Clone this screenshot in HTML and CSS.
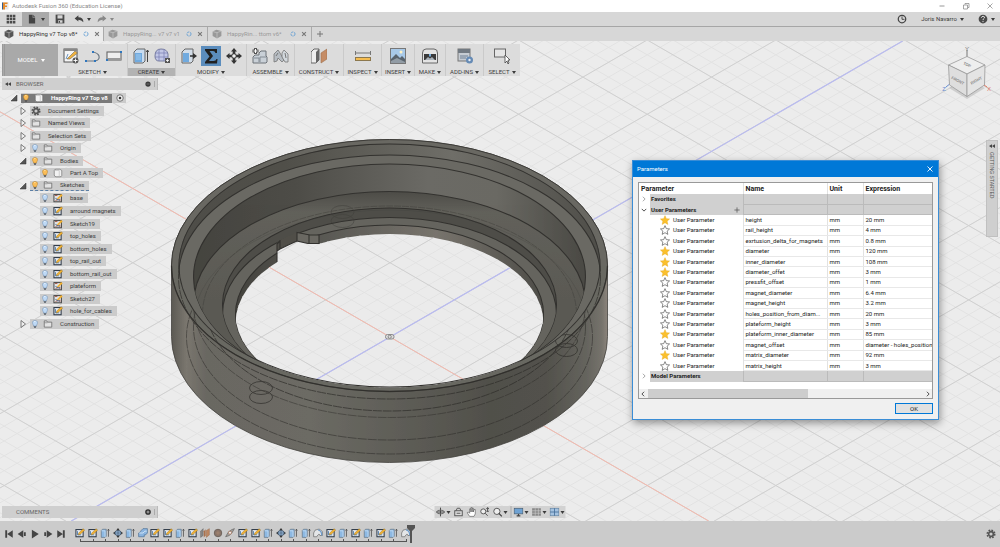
FILE: index.html
```html
<!DOCTYPE html>
<html lang="en">
<head>
<meta charset="utf-8">
<title>Autodesk Fusion 360 (Education License)</title>
<link rel="stylesheet" href="styles.css">
</head>
<body>
<svg class="defs" width="0" height="0" aria-hidden="true">
  <symbol id="sketch" viewBox="0 0 16 16"><rect x="1.5" y="2.500" width="11.500" height="11.500" fill="#e9edf2" stroke="#2f3a48" stroke-width="1.700"/><path d="M4 5v6h6" fill="none" stroke="#4d79a8" stroke-width="1.400"/><path d="M5 11L6 8L13 1L15.500 3.500L8.500 10Z" fill="#f2b233" stroke="#7c5a17" stroke-width=".6"/></symbol>
  <symbol id="sketch2" viewBox="0 0 16 16"><rect x="1.500" y="2.500" width="12" height="11.500" fill="#e0e3e6" stroke="#4a4a4a" stroke-width="1.600"/><path d="M3 4h4M4 12l5-2M11 9v4" stroke="#a55b4a" stroke-width="1.500"/><path d="M4 8l3 3h4" fill="none" stroke="#3d618c" stroke-width="1.500"/><path d="M6 9L13 1.500L15.500 4L8.500 10Z" fill="#f2b233"/></symbol>
  <symbol id="extrude" viewBox="0 0 16 16"><path d="M2 4L4 2H10V13L8 15H2Z" fill="#8db9e3" stroke="#5c6a78"/><path d="M2.500 4.500H8V14.500" fill="none" stroke="#d5e8f8"/><path d="M13.500 2V14M12 4L13.500 2L15 4" fill="none" stroke="#444" stroke-width="1.200"/></symbol>
  <symbol id="move" viewBox="0 0 16 16"><path d="M8 0L11 3.500H9.300V6.700H12.500V5L16 8L12.500 11V9.300H9.300V12.500H11L8 16L5 12.500H6.700V9.300H3.500V11L0 8L3.500 5V6.700H6.700V3.500H5Z" fill="#353535"/><circle cx="8" cy="8" r="2.300" fill="#eee" stroke="#333"/></symbol>
  <symbol id="orbit" viewBox="0 0 16 16"><path d="M8 0L11 4H5ZM8 16L5 12H11ZM0 8L4 5V11ZM16 8L12 11V5Z" fill="#353535"/><ellipse cx="8" cy="8" rx="5" ry="4" fill="#9dbfe2" stroke="#3b4e63" stroke-width="1.300"/><path d="M8 4V12M4 8H12" stroke="#3b4e63"/></symbol>
  <symbol id="combine" viewBox="0 0 16 16"><path d="M5 4L8 1H15V8L12 11H10V14H1V8L4 6Z" fill="#8bb4df" stroke="#43698f"/><path d="M2 8H8L11 5H14" fill="none" stroke="#d9ebfa" stroke-width="1.300"/></symbol>
  <symbol id="plane" viewBox="0 0 16 16"><path d="M1 5L5 1V12L1 15Z" fill="#8a8a8a" stroke="#555" stroke-width=".7"/><path d="M6 5L9 2V12L6 15Z" fill="#aa714c"/><path d="M10 4L15 1V11L10 15Z" fill="#bd8661" stroke="#8d6042" stroke-width=".6"/></symbol>
  <symbol id="hole" viewBox="0 0 16 16"><circle cx="8" cy="8" r="6" fill="#8b7569" stroke="#6c625c" stroke-width="1.500"/><path d="M5 8H11M8 5V11" stroke="#ad8b75"/></symbol>
  <symbol id="joint" viewBox="0 0 16 16"><path d="M1 14L5 7L10 3L15 1L11 8L7 12Z" fill="#a5a19c" stroke="#5c5c5c"/><circle cx="8" cy="7.500" r="2.500" fill="#eee" stroke="#a76949"/></symbol>
  <symbol id="fillet" viewBox="0 0 16 16"><path d="M1 14V8Q2 2 8 2H11L15 6V12H11Q10 7 6 14Z" fill="#e4e6e8" stroke="#5b5b5b"/><path d="M8 3Q14 4 14 12" fill="none" stroke="#6f9ccb" stroke-width="2"/></symbol>
  <symbol id="bulb-on" viewBox="0 0 16 16"><path d="M8 1C2 1 2 7 5 10V12H11V10C14 7 14 1 8 1Z" fill="#fcbd57" stroke="#a8741d" stroke-width=".9"/><path d="M6 4Q7 2.500 9 3" fill="none" stroke="#fff2bd" stroke-width="1.500"/><path d="M5.500 13H10.500M6 15H10" stroke="#565656" stroke-width="1.600"/></symbol>
  <symbol id="bulb-off" viewBox="0 0 16 16"><path d="M8 1C2 1 2 7 5 10V12H11V10C14 7 14 1 8 1Z" fill="#bed9f5" stroke="#6487ad" stroke-width=".9"/><path d="M6 4Q7 2.500 9 3" fill="none" stroke="#fff" stroke-width="1.500"/><path d="M5.500 13H10.500M6 15H10" stroke="#59636e" stroke-width="1.600"/></symbol>
  <symbol id="folder" viewBox="0 0 16 16"><path d="M2 3H6L7 5H14V13H2Z" fill="#e2e2e2" stroke="#666" stroke-width="1.200"/><path d="M2 6H7" stroke="#777"/></symbol>
  <symbol id="body" viewBox="0 0 16 16"><path d="M2 4Q2 2 5 2H11L14 4V12Q14 14 11 14H5Q2 14 2 11Z" fill="#f2f2f2" stroke="#666"/><path d="M3 4H10V13" fill="none" stroke="#b9b9b9"/></symbol>
  <symbol id="gear" viewBox="0 0 16 16"><circle cx="8" cy="8" r="6" fill="none" stroke="#555" stroke-width="2.500" stroke-dasharray="2.700 2"/><circle cx="8" cy="8" r="3.800" fill="none" stroke="#555" stroke-width="2.600"/></symbol>
  <symbol id="tri-open" viewBox="0 0 16 16"><path d="M14 2V14H2Z" fill="#555" stroke="#333"/></symbol>
  <symbol id="tri-closed" viewBox="0 0 16 16"><path d="M4 1L13 8L4 15Z" fill="#eee" stroke="#555" stroke-width="1.500"/></symbol>
  <symbol id="cube" viewBox="0 0 16 16"><path d="M1 4L7 1L15 3V11L8 15L1 11Z" fill="currentColor"/><path d="M1 4L8 6L15 3M8 6V15" fill="none" stroke="#d8d8d8" stroke-width=".8"/></symbol>
  <symbol id="star-on" viewBox="0 0 16 16"><path d="M8 1L10.100 5.800L15.300 6.300L11.400 9.800L12.500 15L8 12.300L3.500 15L4.600 9.800L.7 6.300L5.900 5.800Z" fill="#fbc02d" stroke="#e3a81f" stroke-width=".7"/></symbol>
  <symbol id="star-off" viewBox="0 0 16 16"><path d="M8 1L10.100 5.800L15.300 6.300L11.400 9.800L12.500 15L8 12.300L3.500 15L4.600 9.800L.7 6.300L5.900 5.800Z" fill="#fff" stroke="#555" stroke-width="1.100"/></symbol>
  <symbol id="sync" viewBox="0 0 16 16"><circle cx="8" cy="8" r="5.500" fill="none" stroke="#5f9cd3" stroke-width="2.200" stroke-dasharray="7 1.600"/></symbol>
  <symbol id="cross" viewBox="0 0 16 16"><path d="M3 3L13 13M13 3L3 13" stroke="currentColor" stroke-width="3"/></symbol>
</svg>

<header class="titlebar">
  <svg class="s8" viewBox="0 0 16 16"><rect x="2" y="0" width="13" height="15" fill="#e6e6e6"/><path d="M4 1H13V4H8V7H12V10H8V15H4Z" fill="#e58a2b"/><path d="M2 1H4V15H2Z" fill="#315d92"/></svg>
  <h1>Autodesk Fusion 360 (Education License)</h1>
  <div class="window-buttons">
    <button aria-label="Minimize"><svg class="s8" viewBox="0 0 16 16"><path d="M3 8H13" stroke="#777" stroke-width="1.500"/></svg></button>
    <button aria-label="Restore"><svg class="s8" viewBox="0 0 16 16"><path d="M3 6H11V14H3ZM6 5V3H14V11H12" fill="none" stroke="#777" stroke-width="1.300"/></svg></button>
    <button aria-label="Close"><svg class="s8" viewBox="0 0 16 16"><path d="M3 3L13 13M13 3L3 13" stroke="#777" stroke-width="1.300"/></svg></button>
  </div>
</header>

<div class="quickbar">
  <button class="q-grid" aria-label="Data panel"><svg class="s10" viewBox="0 0 16 16"><path d="M1 1h4v4H1zM6 1h4v4H6zM11 1h4v4h-4zM1 6h4v4H1zM6 6h4v4H6zM11 6h4v4h-4zM1 11h4v4H1zM6 11h4v4H6zM11 11h4v4h-4z" fill="#4b4b4b"/></svg></button>
  <button class="q-file" aria-label="File"><svg class="s10" viewBox="0 0 16 16"><path d="M3 1H9V6H13V15H3Z" fill="#444"/><path d="M10 1L13 5H10Z" fill="#444"/></svg><i class="caret"></i></button>
  <button class="q-save" aria-label="Save"><svg class="s10" viewBox="0 0 16 16"><path d="M1 1H15V15H1Z" fill="#4a4a4a"/><path d="M4 2H12V7H4ZM5 10H12V14H5Z" fill="#d5d5d5"/><path d="M6 11h2v3H6z" fill="#444"/></svg></button>
  <button class="q-undo" aria-label="Undo"><svg class="s10" viewBox="0 0 16 16"><path d="M1 7L7 2V5Q15 5 15 13Q12 9 7 9V12Z" fill="#444"/></svg><i class="caret"></i></button>
  <button class="q-undo q-redo" aria-label="Redo"><svg class="s10" viewBox="0 0 16 16"><path d="M15 7L9 2V5Q1 5 1 13Q4 9 9 9V12Z" fill="#888"/></svg><i class="caret"></i></button>
  <div class="account">
    <button aria-label="Job status"><svg class="s10" viewBox="0 0 16 16"><circle cx="8" cy="8" r="6" fill="none" stroke="#444" stroke-width="2"/><path d="M8 4V8.500H12" fill="none" stroke="#444" stroke-width="1.500"/></svg></button>
    <button class="user">Joris Navarro <i class="caret"></i></button>
    <button aria-label="Help"><svg class="s10" viewBox="0 0 16 16"><circle cx="8" cy="8" r="7" fill="#4a4a4a"/><path d="M5.500 6Q6 3.500 8.200 3.700Q11 4 10.300 6.300Q8 8 8 9.500M8 11V13" fill="none" stroke="#ddd" stroke-width="1.600"/></svg><i class="caret"></i></button>
  </div>
</div>

<nav class="tabs">
  <div class="tab active"><svg class="s10"><use href="#cube"/></svg><a href="#t1">HappyRing v7 Top v8*</a><svg class="s6"><use href="#sync"/></svg><button aria-label="Close tab"><svg class="s6"><use href="#cross"/></svg></button></div>
  <div class="tab"><svg class="s10"><use href="#cube"/></svg><a href="#t2">HappyRing... v7 v7 v1</a><svg class="s6"><use href="#sync"/></svg><button aria-label="Close tab"><svg class="s6"><use href="#cross"/></svg></button></div>
  <div class="tab"><svg class="s10"><use href="#cube"/></svg><a href="#t3">HappyRin... ttom v6*</a><svg class="s6"><use href="#sync"/></svg><button aria-label="Close tab"><svg class="s6"><use href="#cross"/></svg></button></div>
  <button class="new-tab" aria-label="New tab"><svg class="s8" viewBox="0 0 16 16"><path d="M8 2V14M2 8H14" stroke="#777" stroke-width="2"/></svg></button>
</nav>

<main class="viewport">
  <svg class="scene" viewBox="0 41 1000 480" preserveAspectRatio="xMidYMid slice">
    <defs>
      <pattern id="minor" width="10" height="10" patternUnits="userSpaceOnUse" patternTransform="matrix(1.286 .7426 1.286 -.7426 377.140 337)"><path d="M0 5H10M5 0V10" stroke="#e2e2e2" stroke-width=".7"/></pattern>
      <pattern id="major" width="50" height="50" patternUnits="userSpaceOnUse" patternTransform="matrix(1.286 .7426 1.286 -.7426 325.700 337)"><path d="M0 25H50M25 0V50" stroke="#d0d0d0" stroke-width=".7"/></pattern>
      <g id="floor">
        <rect y="41" width="1000" height="480" fill="#ececec"/>
        <rect y="41" width="1000" height="480" fill="url(#minor)"/>
        <rect y="41" width="1000" height="480" fill="url(#major)"/>
        <path d="M0 111.800L708.700 521" stroke="#f5b9ad" stroke-width="1"/>
        <path d="M902.700 41L71.300 521" stroke="#b9bbf0" stroke-width="1.200"/>
      </g>
      <linearGradient id="outer" gradientUnits="userSpaceOnUse" x1="171" x2="608" y1="0" y2="0">
        <stop offset="0" stop-color="#5b5953"/><stop offset=".035" stop-color="#7b776f"/><stop offset=".08" stop-color="#6a6862"/><stop offset=".32" stop-color="#6c6b64"/><stop offset=".55" stop-color="#5d5c56"/><stop offset=".73" stop-color="#51504a"/><stop offset=".86" stop-color="#53524c"/><stop offset=".95" stop-color="#65645e"/><stop offset=".985" stop-color="#76736c"/><stop offset="1" stop-color="#8c857d"/>
      </linearGradient>
      <linearGradient id="lip" gradientUnits="userSpaceOnUse" x1="180" x2="600" y1="0" y2="0"><stop offset="0" stop-color="#4e4d48"/><stop offset=".25" stop-color="#504f49"/><stop offset=".65" stop-color="#6f6e68"/><stop offset="1" stop-color="#4f4e49"/></linearGradient>
      <linearGradient id="wall" gradientUnits="userSpaceOnUse" x1="200" x2="580" y1="0" y2="0"><stop offset="0" stop-color="#464540"/><stop offset=".25" stop-color="#4d4c47"/><stop offset=".6" stop-color="#6b6a65"/><stop offset=".78" stop-color="#6a6963"/><stop offset="1" stop-color="#4c4b46"/></linearGradient>
      <linearGradient id="base" gradientUnits="userSpaceOnUse" x1="0" x2="0" y1="190" y2="300"><stop offset="0" stop-color="#4b4a45"/><stop offset=".2" stop-color="#62615b"/><stop offset="1" stop-color="#5b5a54"/></linearGradient>
      <linearGradient id="bore" gradientUnits="userSpaceOnUse" x1="236" x2="544" y1="0" y2="0"><stop offset="0" stop-color="#44433e"/><stop offset=".3" stop-color="#5b5a55"/><stop offset=".65" stop-color="#78746d"/><stop offset="1" stop-color="#4e4d48"/></linearGradient>
      <clipPath id="c1"><ellipse cx="389.500" cy="265.500" rx="211" ry="122"/></clipPath>
      <clipPath id="c2"><ellipse cx="389.500" cy="277" rx="196" ry="113"/></clipPath>
      <clipPath id="c3"><ellipse cx="389.500" cy="304.500" rx="167" ry="96.500"/></clipPath>
      <clipPath id="c4"><ellipse cx="389.500" cy="314" rx="154" ry="89"/></clipPath>
      <clipPath id="c5"><ellipse cx="389.500" cy="323" rx="154" ry="89"/></clipPath>
      <clipPath id="gap"><path d="M277 263V251L280 249Q288 245 297 241L308 243L319 243.500L300 262Z"/></clipPath>
      <clipPath id="front"><path clip-rule="evenodd" d="M160 265.500H179A210.500 122 0 0 0 600 265.500H620V480H160Z"/></clipPath>
    </defs>
    <use href="#floor"/>
    <path d="M171.500 265.500A218 126 0 0 1 607.500 265.500V336.500A218 126 0 0 1 171.500 336.500Z" fill="url(#outer)" stroke="#44433f" stroke-width=".8"/>
    <ellipse cx="389.500" cy="265.500" rx="218" ry="126" fill="#696862" stroke="#3a3936" stroke-width=".9"/>
    <g clip-path="url(#c1)" stroke="#33322f" stroke-width="1.100">
      <rect x="170" y="130" width="440" height="270" fill="url(#lip)" stroke="none"/>
      <ellipse cx="389.500" cy="277" rx="211" ry="122" fill="#6a6963"/>
      <ellipse cx="389.500" cy="277" rx="196" ry="113" fill="url(#wall)"/>
      <g clip-path="url(#c2)">
        <ellipse cx="389.500" cy="304.500" rx="196" ry="113" fill="url(#base)"/>
        <ellipse cx="389.500" cy="304.500" rx="167" ry="96.500" fill="#4f4e49"/>
        <g clip-path="url(#c3)">
          <ellipse cx="389.500" cy="314" rx="167" ry="96.500" fill="#66655f"/>
          <ellipse cx="389.500" cy="314" rx="154" ry="89" fill="url(#bore)"/>
          <g clip-path="url(#c4)"><g clip-path="url(#c5)"><use href="#floor"/></g></g>
          <path d="M277 243L280 240Q288 236 297 232L310 235H319V243.500L308 243L297 241Q288 245 280 249L277 251Z" fill="#504f49" stroke="none"/>
          <g clip-path="url(#gap)"><use href="#floor"/></g>
          <path d="M297 232.500L310 235H319V243.500H308L297 241Z" fill="#6a6963"/>
          <path d="M309 235V243M277 244V262M280 240V249L277 251M277 244L280 241M297 241Q288 245 280 249" fill="none"/>
        </g>
        <g fill="none" stroke="#3d3c38" stroke-width=".7" opacity=".65"><ellipse cx="389.500" cy="314" rx="187" ry="108" stroke-dasharray="7 1"/><ellipse cx="389.500" cy="323" rx="196" ry="113" opacity=".5"/><ellipse cx="342.500" cy="212" rx="11.500" ry="6.500"/><ellipse cx="342.500" cy="221" rx="11.500" ry="6.500"/></g>
      </g>
      <ellipse cx="389.500" cy="265.500" rx="211" ry="122" fill="none" stroke-width="1.800"/>
    </g>
    <g clip-path="url(#front)" fill="none" stroke="#2c2b28" stroke-width=".9" opacity=".75">
      <ellipse cx="389.500" cy="265.500" rx="218" ry="126" stroke-width="1.300"/>
      <g stroke-dasharray="9 1"><ellipse cx="389.500" cy="277" rx="211" ry="122"/><ellipse cx="389.500" cy="304.500" rx="184" ry="106.500"/><ellipse cx="389.500" cy="304.500" rx="196" ry="113" opacity=".7"/><ellipse cx="389.500" cy="327" rx="196" ry="113" opacity=".8"/><ellipse cx="389.500" cy="337" rx="203" ry="117" opacity=".8"/></g>
      <ellipse cx="261" cy="388" rx="11.500" ry="6.500"/><ellipse cx="261" cy="397" rx="11.500" ry="6.500"/><ellipse cx="566.500" cy="341" rx="11" ry="6.500"/><ellipse cx="566.500" cy="350" rx="11" ry="6.500"/>
    </g>
    <g fill="#ddd" stroke="#777" stroke-width=".8"><rect x="385.500" y="334.500" width="8.500" height="4.500" rx="2"/><circle cx="389.700" cy="336.800" r="1.600"/></g>
    <g class="axis-cube">
      <path d="M967 50V57" stroke="#777"/><path d="M946 87L951 83" stroke="#668ad0"/><path d="M987 87L981 83" stroke="#e1735c"/>
      <path d="M949 88L967 99L985 88L967 80Z" fill="#999" opacity=".35"/>
      <path d="M967 56.500L985 65L967 74L948.500 65Z" fill="#eee" stroke="#999" stroke-width=".8"/>
      <path d="M948.500 65L967 74V96.500L949.500 85Z" fill="#dedede" stroke="#999" stroke-width=".8"/>
      <path d="M985 65L967 74V96.500L984.500 85Z" fill="#e4e4e4" stroke="#999" stroke-width=".8"/>
      <text x="967" y="66" class="face" transform="rotate(25 967 65)">TOP</text>
      <text x="958" y="82" class="face" transform="rotate(28 958 80)">FRONT</text>
      <text x="976" y="82" class="face" transform="rotate(-28 976 80)">RIGHT</text>
      <text x="967" y="51" class="letter" fill="#777">Y</text><text x="944" y="91" class="letter" fill="#668ad0">Z</text><text x="989" y="91" class="letter" fill="#e1735c">X</text>
    </g>
  </svg>

  <div class="toolbar">
    <button class="workspace">MODEL <i class="caret"></i></button>
    <div class="tool-group"><div class="tools">
      <svg class="s16" viewBox="0 0 16 16"><rect x="1" y="1" width="13" height="13" fill="#f5f5f5" stroke="#555"/><path d="M1 1H14V3H1Z" fill="#888"/><path d="M3 11L5 6" stroke="#6794c3"/><path d="M4 11L12 3L14.500 5L7 11Z" fill="#f0b33f" stroke="#555" stroke-width=".5"/><circle cx="12.500" cy="12.500" r="3" fill="#555"/><path d="M12.500 10.500V14.500M10.500 12.500H14.500" stroke="#fff" stroke-width=".9"/></svg>
      <svg class="s16" viewBox="0 0 16 16"><path d="M1 13H10Q15 12 14 8Q13 5 8 4" fill="none" stroke="#6c7782" stroke-width="1.200"/><path d="M0 12h2v2H0zM7 3h2v2H7zM9 12h2v2H9z" fill="#2f76bd"/></svg>
      <svg class="s16" viewBox="0 0 16 16"><rect x="1" y="4" width="14" height="8" fill="#eee" stroke="#666" stroke-width="1.100"/><path d="M1 10H15V12H1Z" fill="#999"/><path d="M0 11h2v2H0zM14 3h2v2h-2z" fill="#2f76bd"/></svg>
    </div><button>SKETCH <i class="caret"></i></button></div>
    <div class="tool-group hot"><div class="tools">
      <svg class="s16" viewBox="0 0 16 16"><path d="M1 4L4 1H12V13L10 15H1Z" fill="#c9dcf0" stroke="#666"/><path d="M2 5H9V14H2Z" fill="#70aadf"/><path d="M3 7H8M3 9H8M3 11H8" stroke="#c5e2fb" stroke-width=".6"/><path d="M14.500 2V14M13.300 4L14.500 2L15.700 4" stroke="#444" fill="none"/></svg>
      <svg class="s16" viewBox="0 0 16 16"><path d="M1 8Q1 1 7 1Q13 1 14 6V13H5Q1 13 1 8Z" fill="#c2c7e6" stroke="#777c9e"/><path d="M5 1V13M10 1V13M1 5H14M1 9H14" stroke="#7980b1" stroke-width=".7"/><rect x="11" y="10" width="5" height="5" fill="#555"/><path d="M13.500 11v3M12 12.500h3" stroke="#fff" stroke-width=".8"/></svg>
    </div><button>CREATE <i class="caret"></i></button></div>
    <div class="tool-group"><div class="tools">
      <svg class="s16" viewBox="0 0 16 16"><path d="M1 4L4 1H12V13L10 15H1Z" fill="#d3dde8" stroke="#666"/><path d="M2 5H8V14H2Z" fill="#70aadf"/><path d="M9 7.200H12V5L16 8L12 11V8.800H9Z" fill="#333"/></svg>
      <span class="selected"><svg class="s16" viewBox="0 0 16 16"><path d="M2 1H14V5H12.500Q12 3 10 3H6.500L10 8L6 13H10.500Q13 13 13.500 11H14.500L14 15.500H2V14L6.500 8.500L2 2.500Z" fill="#202020"/></svg></span>
      <svg class="s16"><use href="#move"/></svg>
    </div><button>MODIFY <i class="caret"></i></button></div>
    <div class="tool-group"><div class="tools">
      <svg class="s16" viewBox="0 0 16 16"><path d="M1 9L3 7H7V5L9 3H14V8L15 9V14L14 15H1Z" fill="#c9d0d7" stroke="#6c7278"/><path d="M2 10H7V14M8 9H14M8 9V14" stroke="#838b93" fill="none"/><path d="M3.500 0V6M.5 3H6.500" stroke="#555" stroke-width="3"/><path d="M3.500 1V5M1.500 3H5.500" stroke="#fff" stroke-width="1"/></svg>
      <svg class="s16" viewBox="0 0 16 16"><path d="M1 14V6L5 2L7 5L11 12L9 14L5 10L4 13Z" fill="#b7bdc3" stroke="#777" stroke-width=".8"/><path d="M15 14V6L11 2L9 5V9L12 14Z" fill="#d2d8dd" stroke="#777" stroke-width=".8"/><path d="M3 8L5 5M12 5L13 10" stroke="#777"/></svg>
    </div><button>ASSEMBLE <i class="caret"></i></button></div>
    <div class="tool-group"><div class="tools"><svg class="s16" viewBox="0 0 16 16"><path d="M0 4L3 1H8V12L5 15H0Z" fill="#eee" stroke="#666"/><path d="M5 4L8 1V12L5 15Z" fill="#666"/><path d="M10 5L16 1V11L10 15Z" fill="#c58c65" stroke="#9f704f" stroke-width=".6"/></svg></div><button>CONSTRUCT <i class="caret"></i></button></div>
    <div class="tool-group"><div class="tools"><svg class="s16" viewBox="0 0 16 16"><path d="M.5 3V7M15.500 3V7M1 5H15" stroke="#777"/><rect x=".5" y="9.500" width="15" height="3" fill="#f6bd51" stroke="#8c784e"/></svg></div><button>INSPECT <i class="caret"></i></button></div>
    <div class="tool-group"><div class="tools"><svg class="s16" viewBox="0 0 16 16"><rect x=".5" y=".5" width="15" height="15" fill="#a8c9e8" stroke="#777"/><circle cx="11" cy="4" r="1.500" fill="#fff2c5"/><path d="M1 11L6 6L10 10L12 8L15 11V15H1Z" fill="#59636d"/><path d="M1 13L7 10L15 14V15H1Z" fill="#929ca5"/></svg></div><button>INSERT <i class="caret"></i></button></div>
    <div class="tool-group"><div class="tools"><svg class="s16" viewBox="0 0 16 16"><path d="M.5 5Q.5 1 4 1H12Q15.500 1 15.500 5V15H.5Z" fill="#e3e3e3" stroke="#666"/><path d="M2 6H14V12H2Z" fill="#3a3a3a"/><path d="M7 6H9V8L8 9L7 8Z" fill="#77aede"/><path d="M3 12L6 9L8 10.500L10 9L13 12Z" fill="#aab3bb"/></svg></div><button>MAKE <i class="caret"></i></button></div>
    <div class="tool-group"><div class="tools"><svg class="s16" viewBox="0 0 16 16"><rect x="1" y="1" width="12" height="12" fill="#c6ccd3" stroke="#777"/><path d="M1 1H13V5H1Z" fill="#727a82"/><path d="M3 8H11M3 10H9" stroke="#6e8095"/><circle cx="12.500" cy="12" r="3.500" fill="#668bb5"/><circle cx="12.500" cy="12" r="1.200" fill="#e7edf4"/></svg></div><button>ADD-INS <i class="caret"></i></button></div>
    <div class="tool-group"><div class="tools"><svg class="s16" viewBox="0 0 16 16"><rect x=".5" y="1" width="11" height="8" fill="#e5e5e5" stroke="#666"/><path d="M11 7V15L13 13L14 16L15 15L14 12H16Z" fill="#fff" stroke="#444" stroke-width=".8"/></svg></div><button>SELECT <i class="caret"></i></button></div>
  </div>

  <aside class="browser">
    <div class="panel-head"><svg class="s6" viewBox="0 0 16 16"><path d="M8 3V13L0 8ZM16 3V13L8 8Z" fill="#444"/></svg><h2>BROWSER</h2><button aria-label="Collapse"><svg class="s6" viewBox="0 0 16 16"><circle cx="8" cy="8" r="7" fill="#3c3c3c"/><path d="M4 8H12" stroke="#999" stroke-width="1.500"/></svg></button></div>
    <ul class="tree">
      <li class="l1"><svg class="s8"><use href="#tri-open"/></svg><span class="item root"><span class="root-main"><svg class="s8"><use href="#bulb-on"/></svg><svg class="s10"><use href="#body"/></svg><b>HappyRing v7 Top v8</b></span><svg class="s8" viewBox="0 0 16 16"><circle cx="8" cy="8" r="6.500" fill="#eee" stroke="#555" stroke-width="1.500"/><circle cx="8" cy="8" r="2.500" fill="#333"/></svg></span></li>
      <li class="l2"><svg class="s8"><use href="#tri-closed"/></svg><span class="item"><svg class="s10"><use href="#gear"/></svg><b>Document Settings</b></span></li>
      <li class="l2"><svg class="s8"><use href="#tri-closed"/></svg><span class="item"><svg class="s10"><use href="#folder"/></svg><b>Named Views</b></span></li>
      <li class="l2"><svg class="s8"><use href="#tri-closed"/></svg><span class="item"><svg class="s10"><use href="#folder"/></svg><b>Selection Sets</b></span></li>
      <li class="l2"><svg class="s8"><use href="#tri-closed"/></svg><span class="item"><svg class="s8"><use href="#bulb-off"/></svg><svg class="s10"><use href="#folder"/></svg><b>Origin</b></span></li>
      <li class="l2"><svg class="s8"><use href="#tri-open"/></svg><span class="item"><svg class="s8"><use href="#bulb-on"/></svg><svg class="s10"><use href="#folder"/></svg><b>Bodies</b></span></li>
      <li class="l3"><span class="item"><svg class="s8"><use href="#bulb-on"/></svg><svg class="s10"><use href="#body"/></svg><b>Part A Top</b></span></li>
      <li class="l2"><svg class="s8"><use href="#tri-open"/></svg><span class="item dashed"><svg class="s8"><use href="#bulb-on"/></svg><svg class="s10"><use href="#folder"/></svg><b>Sketches</b></span></li>
      <li class="l3"><span class="item"><svg class="s8"><use href="#bulb-off"/></svg><svg class="s10"><use href="#sketch2"/></svg><b>base</b></span></li>
      <li class="l3"><span class="item"><svg class="s8"><use href="#bulb-off"/></svg><svg class="s10"><use href="#sketch"/></svg><b>arround magnets</b></span></li>
      <li class="l3"><span class="item"><svg class="s8"><use href="#bulb-off"/></svg><svg class="s10"><use href="#sketch2"/></svg><b>Sketch19</b></span></li>
      <li class="l3"><span class="item"><svg class="s8"><use href="#bulb-off"/></svg><svg class="s10"><use href="#sketch"/></svg><b>top_holes</b></span></li>
      <li class="l3"><span class="item"><svg class="s8"><use href="#bulb-off"/></svg><svg class="s10"><use href="#sketch"/></svg><b>bottom_holes</b></span></li>
      <li class="l3"><span class="item"><svg class="s8"><use href="#bulb-off"/></svg><svg class="s10"><use href="#sketch"/></svg><b>top_rail_out</b></span></li>
      <li class="l3"><span class="item"><svg class="s8"><use href="#bulb-off"/></svg><svg class="s10"><use href="#sketch"/></svg><b>bottom_rail_out</b></span></li>
      <li class="l3"><span class="item"><svg class="s8"><use href="#bulb-off"/></svg><svg class="s10"><use href="#sketch2"/></svg><b>plateform</b></span></li>
      <li class="l3"><span class="item"><svg class="s8"><use href="#bulb-off"/></svg><svg class="s10"><use href="#sketch2"/></svg><b>Sketch27</b></span></li>
      <li class="l3"><span class="item"><svg class="s8"><use href="#bulb-off"/></svg><svg class="s10"><use href="#sketch"/></svg><b>hole_for_cables</b></span></li>
      <li class="l2"><svg class="s8"><use href="#tri-closed"/></svg><span class="item"><svg class="s8"><use href="#bulb-off"/></svg><svg class="s10"><use href="#folder"/></svg><b>Construction</b></span></li>
    </ul>
  </aside>

  <button class="getting-started"><svg class="s6" viewBox="0 0 16 16"><path d="M8 3V13L0 8ZM16 3V13L8 8Z" fill="#444"/></svg>GETTING STARTED</button>

  <section class="dialog" role="dialog" aria-label="Parameters">
    <div class="dialog-title"><h2>Parameters</h2><button aria-label="Close"><svg class="s8" viewBox="0 0 16 16"><path d="M3 3L13 13M13 3L3 13" stroke="#fff" stroke-width="1.800"/></svg></button></div>
    <div class="dialog-body">
      <div class="grid-box">
        <table>
          <colgroup><col class="c-param"><col class="c-name"><col class="c-unit"><col></colgroup>
          <thead><tr><th>Parameter</th><th>Name</th><th>Unit</th><th>Expression</th></tr></thead>
          <tbody>
            <tr class="group"><td><div><svg class="s6" viewBox="0 0 16 16"><path d="M5 2L11 8L5 14" fill="none" stroke="#888" stroke-width="2"/></svg>Favorites</div></td><td></td><td></td><td></td></tr>
            <tr class="group"><td><div><svg class="s6" viewBox="0 0 16 16"><path d="M2 5L8 11L14 5" fill="none" stroke="#444" stroke-width="2.500"/></svg>User Parameters<button aria-label="Add parameter"><svg class="s6" viewBox="0 0 16 16"><path d="M8 1V15M1 8H15" stroke="#555" stroke-width="2"/></svg></button></div></td><td></td><td></td><td></td></tr>
            <tr><td><div><svg class="s10"><use href="#star-on"/></svg>User Parameter</div></td><td>height</td><td>mm</td><td>20 mm</td></tr>
            <tr><td><div><svg class="s10"><use href="#star-off"/></svg>User Parameter</div></td><td>rail_height</td><td>mm</td><td>4 mm</td></tr>
            <tr><td><div><svg class="s10"><use href="#star-off"/></svg>User Parameter</div></td><td>exrtusion_delta_for_magnets</td><td>mm</td><td>0.8 mm</td></tr>
            <tr><td><div><svg class="s10"><use href="#star-on"/></svg>User Parameter</div></td><td>diameter</td><td>mm</td><td>120 mm</td></tr>
            <tr><td><div><svg class="s10"><use href="#star-on"/></svg>User Parameter</div></td><td>inner_diameter</td><td>mm</td><td>108 mm</td></tr>
            <tr><td><div><svg class="s10"><use href="#star-on"/></svg>User Parameter</div></td><td>diameter_offet</td><td>mm</td><td>3 mm</td></tr>
            <tr><td><div><svg class="s10"><use href="#star-off"/></svg>User Parameter</div></td><td>pressfit_offset</td><td>mm</td><td>1 mm</td></tr>
            <tr><td><div><svg class="s10"><use href="#star-off"/></svg>User Parameter</div></td><td>magnet_diameter</td><td>mm</td><td>6.4 mm</td></tr>
            <tr><td><div><svg class="s10"><use href="#star-off"/></svg>User Parameter</div></td><td>magnet_height</td><td>mm</td><td>3.2 mm</td></tr>
            <tr><td><div><svg class="s10"><use href="#star-off"/></svg>User Parameter</div></td><td>holes_position_from_diam...</td><td>mm</td><td>20 mm</td></tr>
            <tr><td><div><svg class="s10"><use href="#star-off"/></svg>User Parameter</div></td><td>plateform_height</td><td>mm</td><td>3 mm</td></tr>
            <tr><td><div><svg class="s10"><use href="#star-on"/></svg>User Parameter</div></td><td>plateform_inner_diameter</td><td>mm</td><td>85 mm</td></tr>
            <tr><td><div><svg class="s10"><use href="#star-off"/></svg>User Parameter</div></td><td>magnet_offset</td><td>mm</td><td>diameter - holes_position_f</td></tr>
            <tr><td><div><svg class="s10"><use href="#star-on"/></svg>User Parameter</div></td><td>matrix_diameter</td><td>mm</td><td>92 mm</td></tr>
            <tr><td><div><svg class="s10"><use href="#star-off"/></svg>User Parameter</div></td><td>matrix_height</td><td>mm</td><td>3 mm</td></tr>
            <tr class="group"><td><div><svg class="s6" viewBox="0 0 16 16"><path d="M5 2L11 8L5 14" fill="none" stroke="#888" stroke-width="2"/></svg>Model Parameters</div></td><td></td><td></td><td></td></tr>
          </tbody>
        </table>
        <div class="scrollbar"><svg class="s6" viewBox="0 0 16 16"><path d="M11 2L5 8L11 14" fill="none" stroke="#444" stroke-width="2.500"/></svg><div class="track"><div class="thumb"></div></div><svg class="s6" viewBox="0 0 16 16"><path d="M5 2L11 8L5 14" fill="none" stroke="#444" stroke-width="2.500"/></svg></div>
      </div>
      <button class="ok">OK</button>
    </div>
  </section>

  <div class="panel-head comments"><h2>COMMENTS</h2><button aria-label="Add comment"><svg class="s6" viewBox="0 0 16 16"><circle cx="8" cy="8" r="7.500" fill="#2e2e2e"/><path d="M4 8H12M8 4V12" stroke="#ddd" stroke-width="1.800"/></svg></button></div>

  <div class="navbar">
    <button aria-label="Orbit"><svg class="s10" viewBox="0 0 16 16"><path d="M8 1V15M1 8H15" stroke="#444" stroke-width="1.500"/><ellipse cx="8" cy="8" rx="6" ry="3" fill="none" stroke="#666" stroke-width="1.500"/></svg><i class="caret"></i></button>
    <button aria-label="Look at"><svg class="s10" viewBox="0 0 16 16"><rect x="2" y="6" width="12" height="8" fill="#ddd" stroke="#555" stroke-width="1.500"/><path d="M4 6L6 2H10L12 6M5 10H11" fill="none" stroke="#555" stroke-width="1.500"/></svg></button>
    <button aria-label="Pan"><svg class="s10" viewBox="0 0 16 16"><path d="M5 15L1 9L3 8L5 10V3H7V8V1H9V8V2H11V8L12 4H14V11L12 15Z" fill="#fff" stroke="#555"/></svg></button>
    <button aria-label="Zoom"><svg class="s10" viewBox="0 0 16 16"><circle cx="6" cy="7" r="4" fill="#eee" stroke="#555" stroke-width="1.500"/><path d="M9 10L13 14M13 1V7M11 3L13 1L15 3M11 6L13 8L15 6" stroke="#444" stroke-width="1.500" fill="none"/></svg></button>
    <button aria-label="Fit"><svg class="s10" viewBox="0 0 16 16"><circle cx="7" cy="7" r="5" fill="#eee" stroke="#555" stroke-width="1.500"/><path d="M10 10L15 15" stroke="#444" stroke-width="2"/></svg><i class="caret"></i></button>
    <button class="divided" aria-label="Display settings"><svg class="s10" viewBox="0 0 16 16"><rect x="1" y="2" width="14" height="9" fill="#6fa2d3" stroke="#456"/><path d="M5 14H11M8 11V14" stroke="#444" stroke-width="2"/></svg><i class="caret"></i></button>
    <button aria-label="Grid settings"><svg class="s10" viewBox="0 0 16 16"><rect x="1" y="2" width="14" height="12" fill="#888"/><path d="M1 6H15M1 10H15M6 2V14M11 2V14" stroke="#ccc"/></svg><i class="caret"></i></button>
    <button aria-label="Viewports"><svg class="s10" viewBox="0 0 16 16"><rect x="1" y="2" width="14" height="12" fill="#a4c2e0" stroke="#5d7f9f"/><path d="M1 8H15M8 2V14" stroke="#446d98" stroke-width="1.300"/></svg><i class="caret"></i></button>
  </div>
</main>

<footer class="timeline">
  <div class="playback">
    <button aria-label="First"><svg class="s10" viewBox="0 0 16 16"><path d="M2 2H5V14H2ZM14 2V14L5 8Z" fill="#444"/></svg></button>
    <button aria-label="Previous"><svg class="s10" viewBox="0 0 16 16"><path d="M10 2V14L1 8ZM11 5H14V11H11Z" fill="#444"/></svg></button>
    <button aria-label="Play"><svg class="s10" viewBox="0 0 16 16"><path d="M3 1V15L14 8Z" fill="#444"/></svg></button>
    <button aria-label="Next"><svg class="s10" viewBox="0 0 16 16"><path d="M6 2V14L15 8ZM2 5H5V11H2Z" fill="#444"/></svg></button>
    <button aria-label="Last"><svg class="s10" viewBox="0 0 16 16"><path d="M11 2H14V14H11ZM2 2V14L11 8Z" fill="#444"/></svg></button>
  </div>
  <ol class="history">
    <li><svg class="s10"><use href="#sketch"/></svg></li><li><svg class="s10"><use href="#sketch"/></svg></li><li><svg class="s10"><use href="#extrude"/></svg></li><li><svg class="s10"><use href="#orbit"/></svg></li><li><svg class="s10"><use href="#extrude"/></svg></li><li><svg class="s10"><use href="#combine"/></svg></li><li><svg class="s10"><use href="#sketch"/></svg></li><li><svg class="s10"><use href="#sketch"/></svg></li><li><svg class="s10"><use href="#extrude"/></svg></li><li><svg class="s10"><use href="#sketch"/></svg></li><li><svg class="s10"><use href="#plane"/></svg></li><li><svg class="s10"><use href="#hole"/></svg></li><li><svg class="s10"><use href="#joint"/></svg></li><li><svg class="s10"><use href="#sketch"/></svg></li><li><svg class="s10"><use href="#sketch"/></svg></li><li><svg class="s10"><use href="#extrude"/></svg></li><li><svg class="s10"><use href="#orbit"/></svg></li><li><svg class="s10"><use href="#extrude"/></svg></li><li><svg class="s10"><use href="#extrude"/></svg></li><li><svg class="s10"><use href="#fillet"/></svg></li><li><svg class="s10"><use href="#sketch"/></svg></li><li><svg class="s10"><use href="#extrude"/></svg></li><li><svg class="s10"><use href="#sketch"/></svg></li><li><svg class="s10"><use href="#extrude"/></svg></li><li><svg class="s10"><use href="#sketch"/></svg></li><li><svg class="s10"><use href="#extrude"/></svg></li><li><svg class="s10"><use href="#fillet"/></svg></li>
  </ol>
  <svg class="marker" viewBox="0 0 8 18"><path d="M0 0H8V3L5 6V18H3V6L0 3Z" fill="#555"/></svg>
  <button class="settings" aria-label="Timeline settings"><svg class="s10"><use href="#gear"/></svg></button>
</footer>
</body>
</html>
```
FILE: styles.css
```css
* { box-sizing: border-box; }

body {
  margin: 0;
  height: 100vh;
  display: flex;
  flex-direction: column;
  overflow: hidden;
  font: 6px/8px Roboto, "Liberation Sans", sans-serif;
  color: #3c3c3c;
  background: #ececec;
}

button {
  display: flex;
  align-items: center;
  justify-content: center;
  margin: 0;
  padding: 0;
  border: 0;
  background: none;
  font: inherit;
  color: inherit;
}

h1, h2 { margin: 0; font: inherit; }
ul, ol { margin: 0; padding: 0; list-style: none; }
svg { display: block; flex: none; }
.defs { position: absolute; }
.s6 { width: 6px; height: 6px; }
.s8 { width: 8px; height: 8px; }
.s10 { width: 10px; height: 10px; }
.s16 { width: 16px; height: 16px; }

.caret {
  flex: none;
  border: 2px solid transparent;
  border-top: 3px solid currentColor;
  border-bottom: 0;
}

/* Title bar */
.titlebar {
  flex: none;
  display: flex;
  align-items: center;
  gap: 3px;
  height: 12px;
  padding: 0 6px 1px 1px;
  background: #fff;
  color: #888;
}
.window-buttons { margin-left: auto; display: flex; gap: 16px; }

/* Quick access bar */
.quickbar {
  flex: none;
  display: flex;
  height: 15px;
  border-bottom: 1px solid #a6a6a6;
  background: #d7d7d7;
}
.q-grid { width: 22px; }
.q-file { width: 27px; gap: 4px; background: #aaa; }
.q-save { width: 22px; }
.q-undo { width: 23px; gap: 3px; }
.q-redo { color: #888; }
.account { margin-left: auto; display: flex; gap: 14px; padding-right: 5px; }
.account button { gap: 3px; }

/* Document tabs */
.tabs {
  flex: none;
  display: flex;
  height: 14px;
  background: #d7d7d7;
  color: #999;
}
.tab {
  display: flex;
  align-items: center;
  gap: 5px;
  width: 104px;
  padding: 0 4px;
  border-right: 1px solid #aaa;
}
.tab a { flex: 1; white-space: nowrap; color: inherit; text-decoration: none; }
.tab > svg:first-child { color: #999; }
.tab button { color: #777; }
.tab.active { background: #ececec; color: #333; }
.tab.active > svg:first-child { color: #555; }
.new-tab { width: 15px; }

/* Canvas */
.viewport { position: relative; flex: 1; min-height: 0; overflow: hidden; }
.scene { position: absolute; inset: 0; width: 100%; height: 100%; }
.axis-cube text { text-anchor: middle; font-family: "Liberation Sans", sans-serif; }
.face { font-size: 4px; font-weight: bold; fill: #8c8c8c; }
.letter { font-size: 6px; }

/* Ribbon */
.toolbar {
  position: absolute;
  top: 3px;
  left: 2px;
  display: grid;
  grid-template-columns: 56px 69px 48px 71px 48px 49px 38px 33px 31px 38px 37px;
  height: 32px;
  background: #dcdcdc;
}
.workspace { gap: 4px; background: #a9a9a9; color: #fff; border-left: 3px double #999; }
.tool-group { display: flex; flex-direction: column; }
.tool-group + .tool-group { border-left: 1px solid #cacaca; }
.tools { flex: 1; display: flex; align-items: center; justify-content: space-evenly; }
.tool-group button { height: 8px; gap: 2px; white-space: nowrap; }
.hot > button { background: #b3b3b3; }
.selected { display: flex; align-items: center; padding: 2px; background: #5b8dbd; }

/* Side panels */
.browser { position: absolute; top: 37px; left: 2px; width: 156px; }
.panel-head {
  display: flex;
  align-items: center;
  height: 12px;
  padding: 0 2px 0 3px;
  border-right: 1px solid #bbb;
  background: #cfcfcf;
  color: #666;
}
.panel-head h2 { flex: 1; padding-left: 5px; }
.panel-head button { padding-right: 3px; border-right: 1px solid #aaa; }
.comments { position: absolute; left: 2px; bottom: 3px; width: 156px; }
.comments h2 { padding-left: 11px; }

.tree { display: grid; grid-auto-rows: 1fr; height: 240px; padding-top: 2px; }
.tree li { display: flex; align-items: center; gap: 3px; }
.l1 { padding-left: 8px; }
.l2 { padding-left: 17px; }
.l3 { padding-left: 38px; }
.item {
  display: flex;
  align-items: center;
  gap: 4px;
  height: 10px;
  padding: 0 5px 0 1px;
  background: #cbcbcb;
  white-space: nowrap;
}
.item b { padding-left: 3px; font-weight: normal; }
.root { padding: 0 2px 0 0; }
.root-main { display: flex; align-items: center; gap: 4px; height: 9px; padding: 0 4px 0 1px; background: #7a7a7a; color: #fff; }
.root-main b { font-weight: bold; }
.dashed { border-bottom: 1px dashed #5c7fa5; }

.getting-started {
  position: absolute;
  top: 99px;
  right: 2px;
  width: 12px;
  height: 97px;
  justify-content: flex-start;
  gap: 3px;
  padding-top: 2px;
  border: 1px solid #c0c0c0;
  background: #cfcfcf;
  writing-mode: vertical-rl;
  font: 5px/8px "Liberation Sans", sans-serif;
  color: #555;
}

/* Parameters dialog */
.dialog {
  position: absolute;
  top: 119px;
  right: 61px;
  width: 307px;
  border: 1px solid #3a8dd6;
  background: #f0f0f0;
  box-shadow: 1px 3px 8px rgba(0, 0, 0, .4);
  color: #222;
}
.dialog-title {
  display: flex;
  align-items: center;
  justify-content: space-between;
  height: 16px;
  padding: 0 4px;
  background: #0078d7;
  color: #fff;
}
.dialog-body { display: flex; flex-direction: column; gap: 4px; padding: 5px; }
.grid-box { overflow: hidden; border: 1px solid #999; background: #fff; }
table { width: 100%; height: 199px; table-layout: fixed; border-collapse: collapse; margin-bottom: 7px; }
.c-param { width: 104px; }
.c-name { width: 84px; }
.c-unit { width: 36px; }
th { height: 11px; padding: 0 2px; border-right: 1px solid #e2e2e2; text-align: left; font-size: 7px; color: #222; }
td {
  height: 10px;
  padding: 0 2px;
  overflow: hidden;
  white-space: nowrap;
  border-right: 1px solid #e2e2e2;
  border-bottom: 1px solid #e8e8e8;
}
td:last-child, th:last-child { padding-right: 0; border-right: 0; }
td:first-child { padding: 0; border-bottom: 0; }
td div { display: flex; align-items: center; gap: 3px; height: 9px; padding-left: 21px; }
.group td { border-color: #bbb; background: #d0d0d0; font-weight: bold; }
.group td:first-child { background: linear-gradient(to right, #fff 11px, #d0d0d0 11px); }
.group div { gap: 4px; padding: 0 3px 0 2px; }
.group button { margin-left: auto; }
.scrollbar { display: flex; align-items: center; height: 9px; padding: 0 1px; gap: 2px; background: #f0f0f0; }
.track { flex: 1; align-self: stretch; }
.thumb { width: 58%; height: 100%; background: #cdcdcd; }
.ok { align-self: flex-end; width: 38px; height: 11px; border: 1px solid #0078d7; background: #e1e1e1; }

/* View controls */
.navbar {
  position: absolute;
  bottom: 3px;
  left: 50%;
  transform: translateX(-50%);
  display: flex;
  gap: 3px;
  height: 12px;
  padding: 0 1px;
  background: #d2d2d2;
}
.navbar button { gap: 1px; }
.navbar .divided { padding-left: 2px; border-left: 1px solid #aaa; }

/* Timeline */
.timeline { flex: none; display: flex; align-items: center; height: 26px; padding: 0 4px; background: #cbcbcb; }
.playback { display: flex; gap: 3px; width: 70px; }
.history { display: grid; grid-template-columns: repeat(27, 1fr); width: 338px; }
.history li { position: relative; display: flex; justify-content: center; padding: 2px 0 4px; }
.history li::before {
  content: "";
  position: absolute;
  right: 0;
  bottom: 0;
  left: 0;
  border-bottom: 1px solid #555;
}
.history li::after { content: ""; position: absolute; bottom: 0; left: 50%; height: 3px; border-left: 1px solid #555; }
.history li:first-child::before { left: 50%; }
.history li:last-child::before { right: 50%; }
.marker { width: 8px; height: 18px; margin-left: -5px; z-index: 1; }
.settings { margin-left: auto; }
```
